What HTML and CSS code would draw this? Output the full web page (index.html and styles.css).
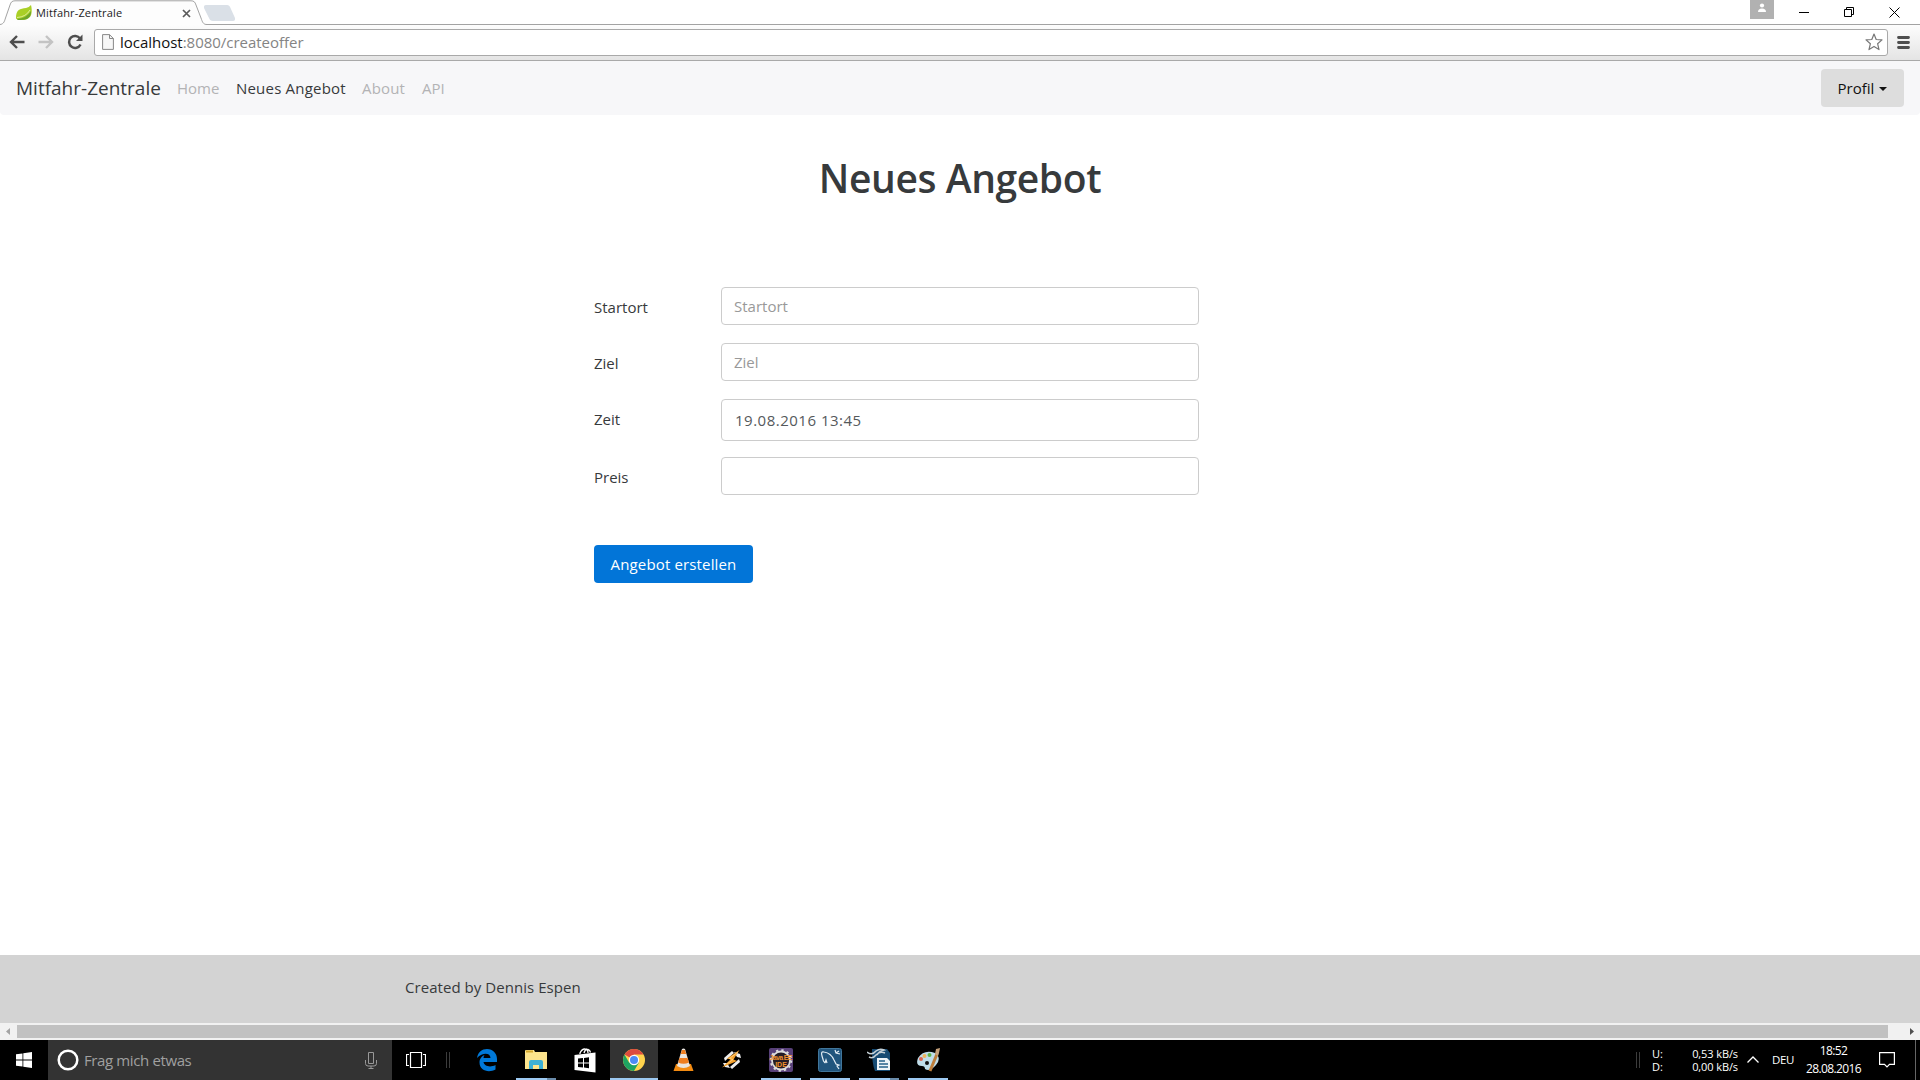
FILE: index.html
```html
<!DOCTYPE html>
<html lang="de">
<head>
<meta charset="utf-8">
<title>Mitfahr-Zentrale</title>
<link rel="stylesheet" href="styles.css">
</head>
<body>
<header class="browser">
  <div class="tabstrip">
    <svg class="tab-shape" width="240" height="25" viewBox="0 0 240 25"><path d="M0 24.5C4 24 4.500 21 5.500 18L10 5C11 2 12 .8 15 .8H191C194 .8 195 2 196 5L201 18C202.500 22 203 24.500 207 24.500V25H0Z" fill="#fdfdfd"/><path d="M0 24.500C4 24 4.500 21 5.500 18L10 5C11 2 12 .8 15 .8H191C194 .8 195 2 196 5L201 18C202.500 22 203 24.500 207 24.500" fill="none" stroke="#a3a3a3"/><path d="M206 5H227Q229.500 5 230.500 8L235 18Q235.500 21 233 21H213Q210 21 209 18L204 8Q203.500 5 206 5Z" fill="#dae0e7"/></svg>
    <div class="tab">
      <svg width="17" height="16" viewBox="0 0 17 16"><path d="M15 0C16.500 6 16.500 14 8 15H2L0 13.500C0 4 4 4 10 3Q13 2.500 15 0Z" fill="#a9cf26"/><path d="M1 14Q11 13 15 6C15.500 15 8 15 2 15Z" fill="#6da52c"/><path d="M1 12.500Q10 12 14 5" fill="none" stroke="#eaf4b5" stroke-width=".8"/></svg>
      <span class="tab-title">Mitfahr-Zentrale</span>
      <svg width="9" height="9" viewBox="0 0 9 9"><path d="M1 1 8 8M8 1 1 8" stroke="#5a5a5a" stroke-width="1.700"/></svg>
    </div>
    <div class="window-controls">
      <span class="user"><svg width="10" height="10" viewBox="0 0 10 10"><circle cx="5" cy="2.500" r="2.100" fill="#fff"/><path d="M1 9Q1 5.500 5 5.500T9 9Z" fill="#fff"/></svg></span>
      <svg width="10" height="12" viewBox="0 0 10 12"><path d="M0 6.500H10" stroke="#000"/></svg>
      <svg width="10" height="10" viewBox="0 0 10 10"><path d="M.5 2.500H7.500V9.500H.5ZM2.500 2.500V.5H9.500V7.500H7.500" fill="none" stroke="#000"/></svg>
      <svg width="11" height="11" viewBox="0 0 11 11"><path d="M.5.5 10.500 10.500M10.500.5.5 10.500" stroke="#000"/></svg>
    </div>
  </div>
  <div class="toolbar">
    <svg width="16" height="14" viewBox="0 0 16 14"><path d="M8 1 2 7 8 13M2.500 7H15.500" fill="none" stroke="#4e4e4e" stroke-width="2.400"/></svg>
    <svg width="16" height="14" viewBox="0 0 16 14"><path d="M8 1 14 7 8 13M.5 7H13.500" fill="none" stroke="#c3c3c3" stroke-width="2.400"/></svg>
    <svg width="16" height="16" viewBox="0 0 16 16"><path d="M13 4.500A6 6 0 1 0 13.500 10.500" fill="none" stroke="#4e4e4e" stroke-width="2.500"/><path d="M15.500.5V7H9Z" fill="#4e4e4e"/></svg>
    <div class="omnibox">
      <svg width="12" height="16" viewBox="0 0 12 16"><path d="M.6.6H7.500L11.400 4.500V15.400H.6Z" fill="#f7f7f7" stroke="#888"/><path d="M7.500.6V4.500H11.400" fill="none" stroke="#888"/></svg>
      <span class="url"><b>localhost</b>:8080/createoffer</span>
      <svg width="18" height="18" viewBox="0 0 18 18"><path d="M9 1 11.200 6.500 17 6.900 12.600 10.700 14 16.600 9 13.400 4 16.600 5.400 10.700 1 6.900 6.800 6.500Z" fill="#fff" stroke="#777" stroke-width="1.200" stroke-linejoin="round"/></svg>
    </div>
    <svg width="13" height="13" viewBox="0 0 13 13"><path d="M1.500 1.500H11.500M1.500 6.500H11.500M1.500 11.500H11.500" stroke="#4e4e4e" stroke-width="2.800" stroke-linecap="round"/></svg>
  </div>
</header>

<nav class="navbar">
  <a class="brand">Mitfahr-Zentrale</a>
  <a class="link home">Home</a>
  <a class="link active">Neues Angebot</a>
  <a class="link about">About</a>
  <a class="link api">API</a>
  <button class="profile">Profil<i class="caret"></i></button>
</nav>

<main class="page">
  <h1>Neues Angebot</h1>
  <form class="offer">
    <div class="row"><label>Startort</label><input placeholder="Startort"></div>
    <div class="row"><label>Ziel</label><input placeholder="Ziel"></div>
    <div class="row time"><label>Zeit</label><input value="19.08.2016 13:45"></div>
    <div class="row"><label>Preis</label><input></div>
    <button class="submit" type="button">Angebot erstellen</button>
  </form>
</main>
<footer class="footer">Created by Dennis Espen</footer>
<div class="scrollbar">
  <svg width="17" height="17" viewBox="0 0 17 17"><path d="M10 5V12L6 8.500Z" fill="#a3a3a3"/></svg>
  <div class="thumb"></div>
  <svg width="17" height="17" viewBox="0 0 17 17"><path d="M7 5V12L11 8.500Z" fill="#505050"/></svg>
</div>

<div class="taskbar">
  <div class="start"><svg width="16" height="16" viewBox="0 0 16 16"><path d="M0 2.300 6.500 1.400V7.500H0ZM7.300 1.300 16 0V7.500H7.300ZM0 8.400H6.500V14.600L0 13.700ZM7.300 8.400H16V16L7.300 14.700Z" fill="#fff"/></svg></div>
  <div class="search">
    <svg width="22" height="22" viewBox="0 0 22 22"><circle cx="11" cy="11" r="9.300" fill="none" stroke="#fff" stroke-width="2.500"/></svg>
    <span>Frag mich etwas</span>
    <svg width="12" height="17" viewBox="0 0 12 17"><path d="M3.500.5H8.500V11.500H3.500ZM.5 8V11.500Q.5 14 3 14H9Q11.500 14 11.500 11.500V8M6 14V16.500M3.500 16.500H8.500" fill="none" stroke="#999"/></svg>
  </div>
  <div class="taskview"><svg width="20" height="16" viewBox="0 0 20 16"><path d="M4.500.5H15.500V15.500H4.500ZM3 2.500H.5V13.500H3M17 2.500H19.500V13.500H17" fill="none" stroke="#fff" stroke-width="1.200"/></svg></div>
  <div class="grip"></div>
  <div class="apps">
    <div class="app"><svg width="22" height="24" viewBox="0 0 22 24"><path d="M1 10C2 4 6 1 11 1C17 1 21 5.500 21 11V14H7.500C8 18 14 20 19.500 17V21.500C13 25 3.500 23 3.500 14.500C3.500 10.500 6 8 8.500 7C7.800 8 7.500 9 7.500 10H14.500C14.500 5 7 4 1 10Z" fill="#0078d7"/></svg></div>
    <div class="app open short group"><svg width="24" height="22" viewBox="0 0 24 22"><path d="M1 2Q1 1 2 1H10L11 3H23V20H1Z" fill="#fce48d"/><path d="M2 2.500H9" stroke="#d5a92d" stroke-width="2"/><path d="M5 20V13Q5 11 7 11H17Q19 11 19 13V20H15V16H9V20Z" fill="#3db1d5"/></svg></div>
    <div class="app"><svg width="22" height="25" viewBox="0 0 22 25"><path d="M.5 7 21.500 4.500V24.500L.5 22Z" fill="#fff"/><path d="M6 6V5Q8 .8 11 1Q14 1 14 5M10 5Q11 1 14 1.500Q16 2 16.500 4.500" fill="none" stroke="#fff" stroke-width="1.300"/><path d="M4 10.500 9 10V14.500H4ZM10 9.900 15 9.300V14.500H10ZM4 15.500H9V19.500L4 19ZM10 15.500H15V20.200L10 19.600Z" fill="#000"/></svg></div>
    <div class="app open current"><svg width="22" height="22" viewBox="0 0 22 22"><circle cx="11" cy="11" r="11" fill="#ffd34d"/><path d="M11 11 1.500 5.500A11 11 0 0 1 20.500 5.500H11Z" fill="#dd4b3e"/><path d="M11 11 6.200 13.700 1.500 5.500A11 11 0 0 0 11 22L15.800 13.700Z" fill="#1ea362"/><circle cx="11" cy="11" r="5.200" fill="#fff"/><circle cx="11" cy="11" r="4" fill="#4c8bf5"/></svg></div>
    <div class="app"><svg width="21" height="24" viewBox="0 0 21 24"><path d="M3 16H18L20.500 23H.5Z" fill="#f38b12"/><path d="M9 1Q10.500 0 12 1L17 18Q10.500 22 4 18Z" fill="#e9e4de"/><path d="M9 2 12 2 13.200 6H7.800ZM6.500 10H14.500L16 14.500Q10.500 17 5.200 14.500Z" fill="#ee7e20"/></svg></div>
    <div class="app"><svg width="20" height="22" viewBox="0 0 20 22"><path d="M10 2 2 9 3 12 12 4ZM12 3 18 5 19 9 15 8ZM8 18 17 10 18 13 10 20ZM1 14 5 14 8 19 3 18Z" fill="#eee"/><path d="M17.500 1 5 9.500 8.500 10.500 0 18.500 15 12 11.500 10.500Z" fill="#f6a12b"/><path d="M16 3 7.500 9.500 11 10.500 5 15" fill="none" stroke="#ffd58c" stroke-width=".8"/></svg></div>
    <div class="app open short"><svg class="ide" width="24" height="24" viewBox="0 0 24 24"><rect width="24" height="24" rx="2" fill="#584079"/><circle cx="12" cy="12.500" r="9" fill="#241c25" stroke="#ddd" stroke-width="1.800"/><circle cx="12" cy="12.500" r="10.300" fill="none" stroke="#ddd" stroke-width="2" stroke-dasharray="2.300 3.100"/><text x="12" y="12" text-anchor="middle" textLength="23">Java EE</text><text x="12" y="19" text-anchor="middle">IDE</text></svg></div>
    <div class="app open short"><svg width="24" height="24" viewBox="0 0 24 24"><rect x=".5" y=".5" width="23" height="23" rx="2" fill="#21557d" stroke="#41769b"/><path d="M7 15 5.500 13 4 8Q2.500 3 6 4Q13 5 16 12L18 16 21 17 19 18 21 21M7 15 8 12 9 15M17 2 18 5 22 6M18 5 21 3" fill="none" stroke="#e3edf4" stroke-width="1.200"/></svg></div>
    <div class="app open short group"><svg width="24" height="24" viewBox="0 0 24 24"><path d="M5 1H20L23 5V23H8Q5 16 5 1Z" fill="#164a72"/><path d="M10 10H20L23 13V22H10Z" fill="#eef4f8"/><path d="M12 13H18M12 16H21M12 19H21" stroke="#27618b" stroke-width="1.500"/><path d="M0 4Q5 8 9 3Q13 0 17 2Q12 3 10 7M2 9Q6 11 9 7Q13 3 18 5" fill="none" stroke="#c5d0d6" stroke-width="1.500"/></svg></div>
    <div class="app open short"><svg width="25" height="24" viewBox="0 0 25 24"><path d="M2 10Q8 1 19 5Q26 10 20 17Q14 24 9 21Q9 18 6 18Q-1 18 2 10Z" fill="#bfddea"/><circle cx="5" cy="11" r="2" fill="#db6550"/><circle cx="8.500" cy="8" r="2" fill="#efb45c"/><circle cx="13.500" cy="7" r="2" fill="#63b348"/><circle cx="11" cy="15" r="2" fill="#111"/><path d="M21 6 14 23" stroke="#bd7e3c" stroke-width="3"/><path d="M19 6 20 1 24 0 23 5 22 8Z" fill="#c5a07a"/></svg></div>
  </div>
  <div class="tray">
    <div class="grip"></div>
    <div class="net"><span>U:</span><span>0,53 kB/s</span><span>D:</span><span>0,00 kB/s</span></div>
    <svg class="chevron" width="12" height="8" viewBox="0 0 12 8"><path d="M.5 6.500 6 1 11.500 6.500" fill="none" stroke="#fff" stroke-width="1.300"/></svg>
    <span class="lang">DEU</span>
    <div class="clock"><span class="hour">18:52</span><span>28.08.2016</span></div>
    <svg class="notes" width="16" height="17" viewBox="0 0 16 17"><path d="M.6.600H15.400V12.400H10.500L8 15 5.500 12.400H.6Z" fill="none" stroke="#fff" stroke-width="1.200"/></svg>
    <div class="peek"></div>
  </div>
</div>
</body>
</html>
```
FILE: styles.css
```css
* { box-sizing: border-box; }
body { margin: 0; width: 1920px; height: 1080px; overflow: hidden; background: #fff; color: #373a3c; font: 15px/24px "Open Sans", "Noto Sans", sans-serif; display: flex; flex-direction: column; }
svg { display: block; flex: none; }
input, button { font: inherit; }
span, a, label, button { white-space: nowrap; }

/* browser chrome */
.browser { height: 61px; flex: none; }
.tabstrip { position: relative; height: 25px; display: flex; justify-content: space-between; border-bottom: 1px solid #a3a3a3; }
.tab-shape { position: absolute; left: 0; top: 0; }
.tab { position: relative; display: flex; align-items: center; width: 191px; height: 26px; padding-left: 16px; }
.tab-title { flex: 1; margin-left: 3px; font-size: 11px; letter-spacing: .15px; color: #222; }
.window-controls { display: flex; align-items: center; height: 24px; padding-right: 20px; }
.user { width: 24px; height: 19px; margin: 0 25px 5px 0; background: #b1b1b1; display: flex; justify-content: center; padding-top: 3px; }
.window-controls > svg { margin-right: 35px; }
.window-controls > svg:last-child { margin-right: 0; }
.toolbar { height: 36px; display: flex; align-items: center; padding: 0 10px 1px 9px; background: linear-gradient(#fdfdfd, #e4e4e4); border-bottom: 1px solid #a9a9a9; }
.toolbar > svg { margin-right: 13px; }
.omnibox { flex: 1; height: 27px; margin: 0 9px 0 -2px; padding: 0 4px 0 7px; display: flex; align-items: center; background: #fff; border: 1px solid #a9a9a9; border-radius: 3px; }
.toolbar > svg:last-child { margin-right: 0; }
.url { flex: 1; margin-left: 6px; color: #848484; font-size: 15px; letter-spacing: -.02px; }
.url b { color: #111; font-weight: 400; }

/* site navigation */
.navbar { height: 54px; flex: none; display: flex; align-items: center; padding: 0 16px; background: #f7f7f9; border-radius: 0 0 4px 4px; }
.brand { width: 161px; font-size: 19px; letter-spacing: 0; }
.link { color: #b3b3b5; }
.home { width: 59px; }
.active { width: 126px; color: #373a3c; letter-spacing: .2px; }
.about { width: 60px; letter-spacing: .15px; }
.profile { margin-left: auto; width: 83px; height: 38px; padding: 0; border: 0; border-radius: 4px; background: #ddd; color: #111; display: flex; align-items: center; justify-content: center; }
.caret { margin: 2px 0 0 5px; border: 4px solid transparent; border-top-color: #111; border-bottom: 0; }

/* offer form */
.page { height: 840px; flex: none; padding-top: 41px; }
h1 { margin: 0 0 87px; text-align: center; font-size: 39px; line-height: 44px; font-weight: 600; letter-spacing: -.4px; }
.offer { width: 605px; margin-left: 594px; }
.row { display: grid; grid-template: 100% / 127px 1fr; height: 38px; margin-bottom: 18px; }
.row label { line-height: 40px; }
.row input { width: 100%; height: 100%; padding: 0 12px; border: 1px solid #ccc; border-radius: 4px; color: #55595c; outline: 0; }
.row input::placeholder { color: #999; }
.row.time { height: 42px; margin-bottom: 16px; }
.row.time input { padding-left: 13px; letter-spacing: .5px; }
.submit { width: 159px; height: 38px; margin-top: 32px; padding: 0; border: 0; border-radius: 4px; background: #0275d8; color: #fff; letter-spacing: .15px; }
.footer { height: 68px; flex: none; padding: 20px 0 0 405px; background: #d3d3d3; letter-spacing: .05px; }
.scrollbar { height: 17px; flex: none; display: flex; background: #f1f1f1; }
.thumb { width: 1871px; margin: 2px 15px 2px 0; background: #c1c1c1; }

/* taskbar */
.taskbar { height: 40px; flex: none; display: flex; align-items: center; background: #000; color: #fff; }
.start { width: 48px; display: flex; justify-content: center; }
.search { width: 344px; height: 40px; padding: 0 15px 0 9px; display: flex; align-items: center; background: #333; color: #a0a0a0; }
.search span { flex: 1; margin-left: 5px; letter-spacing: -.38px; }
.taskview { width: 54px; padding-left: 14px; }
.grip { width: 4px; height: 16px; border: solid #3c3c3c; border-width: 0 1px; }
.apps { display: flex; gap: 1px; margin-left: 13px; }
.app { width: 48px; height: 40px; display: flex; align-items: center; justify-content: center; }
.open { background: linear-gradient(#9dc9f1, #9dc9f1) bottom / 48px 2px no-repeat; }
.short { background-size: 40px 2px; }
.group { background-image: linear-gradient(90deg, #9dc9f1 31px, #6a8cab 31px); }
.current { background-color: #333; }
.ide text { font: bold 7px "Liberation Sans", sans-serif; fill: #ee8f2c; }
.tray { margin-left: auto; flex: none; width: 284px; height: 40px; display: flex; align-items: center; }
.net { width: 86px; margin-left: 12px; display: grid; grid-template-columns: 1fr auto; font-size: 11px; line-height: 13px; letter-spacing: -.1px; }
.chevron { margin-left: 9px; }
.lang { width: 22px; margin-left: 13px; font-size: 11.500px; letter-spacing: -.4px; }
.clock { width: 55px; margin-left: 12px; font-size: 12px; line-height: 18px; display: flex; flex-direction: column; align-items: center; letter-spacing: -.6px; }
.notes { margin-left: 18px; }
.peek { width: 1px; height: 40px; margin-left: auto; margin-right: 4px; background: #666; }
```
